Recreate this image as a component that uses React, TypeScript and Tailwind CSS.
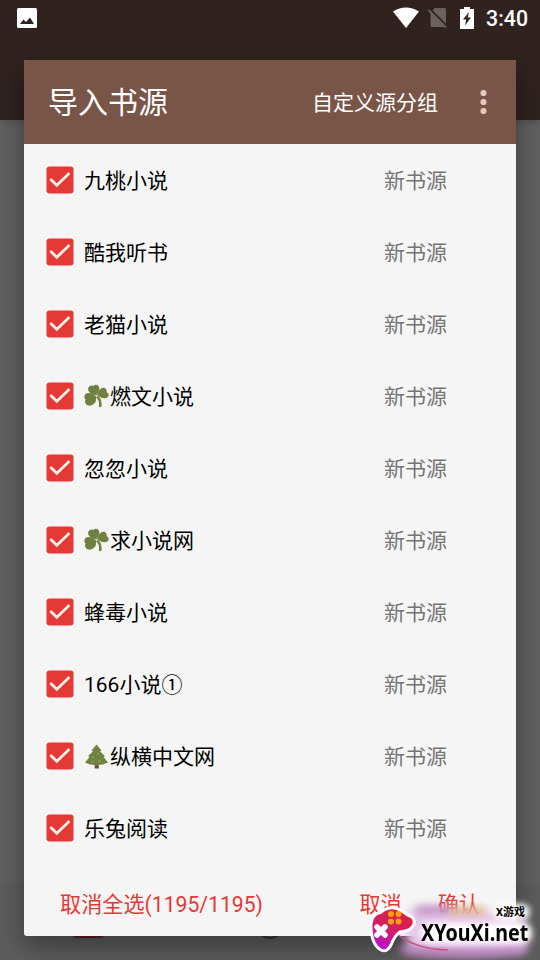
import type { ReactNode } from "react";

type Source = { name: string; icon?: "clover" | "tree" };

const sources: Source[] = [
  { name: "九桃小说" },
  { name: "酷我听书" },
  { name: "老猫小说" },
  { name: "燃文小说", icon: "clover" },
  { name: "忽忽小说" },
  { name: "求小说网", icon: "clover" },
  { name: "蜂毒小说" },
  { name: "166小说①" },
  { name: "纵横中文网", icon: "tree" },
  { name: "乐兔阅读" },
];

function StatusBar() {
  return (
    <div className="flex h-9 items-center pl-[17px] pr-[12px] text-white">
      <svg className="h-5 w-5" viewBox="0 0 20 20">
        <rect width="20" height="20" rx="1.5" fill="#fff" />
        <path d="M3 16l3.500-4.500 2.500 2.500 4-4.500L17 16z" fill="#30231f" />
      </svg>
      <svg className="ml-auto h-[22px] w-[26px]" viewBox="0 0 26 22">
        <path d="M0 4.500Q13-3.500 26 4.500L13 21z" fill="#fff" />
      </svg>
      <svg className="ml-[8px] h-[22px] w-[22px]" viewBox="0 0 22 22">
        <path d="M8 1h9.500q1.500 0 1.500 1.500V16.800L5.500 3.300zM3.500 6L17.500 20H5q-1.500 0-1.500-1.500z" fill="#6b615e" />
        <path d="M1.500 3L19 20.500" stroke="#6b615e" strokeWidth="1.800" />
      </svg>
      <svg className="ml-[11px] h-[22px] w-[14px]" viewBox="0 0 14 22">
        <path d="M4 0h6v2h4v20H0V2h4z" fill="#fff" />
        <path d="M9 5L3 12.500h3.200L5 18.500 11 10.500H7.800z" fill="#30231f" />
      </svg>
      <span className="ml-[12px] mt-[2px] text-[21.300px] font-medium leading-none">3:40</span>
    </div>
  );
}

function Checkbox() {
  return (
    <svg className="h-7 w-7 shrink-0" viewBox="0 0 28 28">
      <rect x="0.500" y="0.500" width="27" height="27" rx="3" fill="#e53935" />
      <path d="M4.300 13L10.800 19.200 23.500 7" fill="none" stroke="#fff3e8" strokeWidth="2.800" />
    </svg>
  );
}

function Clover() {
  return (
    <svg className="mr-px h-[25px] w-[25px] shrink-0" viewBox="0 0 25 25">
      <g fill="#6f803f">
        <path d="M12.500 11.500C6 10.500 3 7 4.500 3.500Q6.500 .5 9.500 2Q12-.5 14.500 2Q17 6 12.500 11.500z" />
        <path d="M13.500 11.500C14 6 18 2.500 21 4Q23.500 6 22.500 8Q26 10 24 13Q20 16 13.500 11.500z" />
        <path d="M12 12.500C8 8.500 3 8 1 10.500Q-.5 13.500 1.500 15.500Q0 19 3 21Q6 22.500 8 21Q13 19 12 12.500z" />
      </g>
      <path d="M13 12.500Q17.500 16 16 23" fill="none" stroke="#74863f" strokeWidth="2.600" />
    </svg>
  );
}

function Tree() {
  return (
    <svg className="mr-px h-[25px] w-[25px] shrink-0" viewBox="0 0 25 25">
      <path d="M11 19h3.500l.5 5.500h-4.500z" fill="#71533d" />
      <path d="M12.500 0.500L17.500 6.500l-1.500 1 5 4.500-1.500 1 4.500 5.500Q18 21.500 12.500 21Q7 21.500 1 18.500L5.500 13l-1.500-1L9 7.500l-1.500-1z" fill="#728243" />
      <path d="M8 12.500l2 1M15 9.500l-2 1M7 17.500l3 .5M17 16l-3 1.500" stroke="#9aa552" strokeWidth="1" />
    </svg>
  );
}

function SourceRow({ name, icon }: Source) {
  return (
    <li className="flex h-[72px] items-center pl-[22px]">
      <Checkbox />
      <div className="ml-[10px] flex w-[300px] items-center text-[21px] text-black">
        {icon === "clover" && <Clover />}
        {icon === "tree" && <Tree />}
        <span className="pt-1">{name}</span>
      </div>
      <span className="pt-1 text-[21px] text-[#757575]">新书源</span>
    </li>
  );
}

function Action({ children }: { children: ReactNode }) {
  return <button className="text-[21.150px] text-[#e53935]">{children}</button>;
}

function Watermark() {
  return (
    <div className="absolute bottom-0 right-0 h-[64px] w-[178px]">
      <svg className="absolute inset-0" width="178" height="64" viewBox="0 0 178 64">
        <defs>
          <linearGradient id="pad" x1="0.700" y1="0" x2="0.200" y2="1">
            <stop offset="0" stopColor="#e51d3c" />
            <stop offset="0.500" stopColor="#cf2065" />
            <stop offset="1" stopColor="#b40be0" />
          </linearGradient>
          <filter id="soft" filterUnits="userSpaceOnUse" x="0" y="-20" width="220" height="110">
            <feGaussianBlur stdDeviation="5" />
          </filter>
          <filter id="streak" filterUnits="userSpaceOnUse" x="0" y="-20" width="220" height="110">
            <feGaussianBlur stdDeviation="4" />
          </filter>
          <filter id="halo" filterUnits="userSpaceOnUse" x="30" y="-20" width="190" height="110">
            <feGaussianBlur stdDeviation="3" />
          </filter>
        </defs>
        <path d="M44 18Q60 10 112 14L162 22Q170 40 163 55Q110 60 45 54z" fill="#e6c6e9" filter="url(#soft)" />
        <g filter="url(#streak)" fill="none" strokeWidth="7" strokeLinecap="round">
          <path d="M56 14H86" stroke="#b77cbc" />
          <path d="M90 15H120" stroke="#dcae7a" />
          <path d="M42 54Q85 62 160 54" stroke="#c684cc" />
        </g>
        <path d="M68 37H160" stroke="#fff" strokeWidth="20" strokeLinecap="round" filter="url(#halo)" />
        <path d="M140 16H160" stroke="#fff" strokeWidth="16" strokeLinecap="round" filter="url(#halo)" />
        <path d="M34 37Q52 53 86 54" fill="none" stroke="#ce4d80" strokeWidth="1.500" />
        <path d="M16 17Q19 17 22 14Q31 9 40 15Q45 19 50 21Q54 25 51 30Q48 35 38 36Q33 39 29 49Q25 57 19 54Q10 49 9 33Q8 20 16 17z" fill="url(#pad)" stroke="#fff" strokeWidth="3" />
        <path d="M15 31l8 8M23 31l-8 8" stroke="#fff" strokeWidth="5.500" strokeLinecap="round" />
        <g fill="#ffa20e">
          <circle cx="29" cy="18" r="3" />
          <circle cx="36.500" cy="18" r="3" />
          <circle cx="29" cy="25.500" r="3" />
          <circle cx="36.500" cy="25.500" r="3" />
        </g>
      </svg>
      <span className="absolute left-[134px] top-[11px] whitespace-nowrap text-[11px] font-bold leading-none text-black">X游戏</span>
      <span className="absolute left-[59px] top-[24px] origin-left scale-x-[0.82] whitespace-nowrap font-['Noto_Sans',sans-serif] text-[24px] font-bold leading-[24px] text-black">XYouXi.net</span>
    </div>
  );
}

export default function App() {
  return (
    <div className="relative h-[960px] w-[540px] overflow-hidden bg-[#616161] font-[Roboto,'Noto_Sans_CJK_SC',sans-serif]">
      <div className="h-[120px] bg-[#30231f] shadow-md">
        <StatusBar />
      </div>

      {/* bottom navigation showing under the dialog */}
      <div className="absolute inset-x-0 bottom-0 h-[76px] bg-[#5d5d5d]">
        <div className="absolute bottom-[22px] left-[73px] h-3 w-[31px] rounded bg-[#631d1d]" />
        <div className="absolute bottom-[21px] left-[258px] h-6 w-6 rounded-full border-2 border-[#303030]" />
      </div>

      <div className="absolute left-6 top-[60px] flex h-[876px] w-[492px] flex-col overflow-hidden rounded-[3px] bg-[#f5f5f5] shadow-[0_10px_28px_rgba(0,0,0,0.4)]">
        <header className="flex h-[84px] shrink-0 items-center bg-[#795548] pl-6 pr-[29.500px]">
          <h1 className="pt-[2px] text-[30px] leading-none text-white">导入书源</h1>
          <span className="ml-auto pt-1 text-[21px] text-white">自定义源分组</span>
          <svg className="ml-[41.500px] h-6 w-[7px]" viewBox="0 0 7 24" fill="#e4c8bf">
            <circle cx="3.500" cy="3" r="3.100" />
            <circle cx="3.500" cy="12" r="3.100" />
            <circle cx="3.500" cy="21" r="3.100" />
          </svg>
        </header>
        <ul>
          {sources.map((source) => (
            <SourceRow key={source.name} {...source} />
          ))}
        </ul>
        <footer className="flex flex-1 items-center pl-9 pr-[36px] pt-[10px]">
          <Action>取消全选(1195/1195)</Action>
          <div className="ml-auto flex gap-9">
            <Action>取消</Action>
            <Action>确认</Action>
          </div>
        </footer>
      </div>

      <Watermark />
    </div>
  );
}
